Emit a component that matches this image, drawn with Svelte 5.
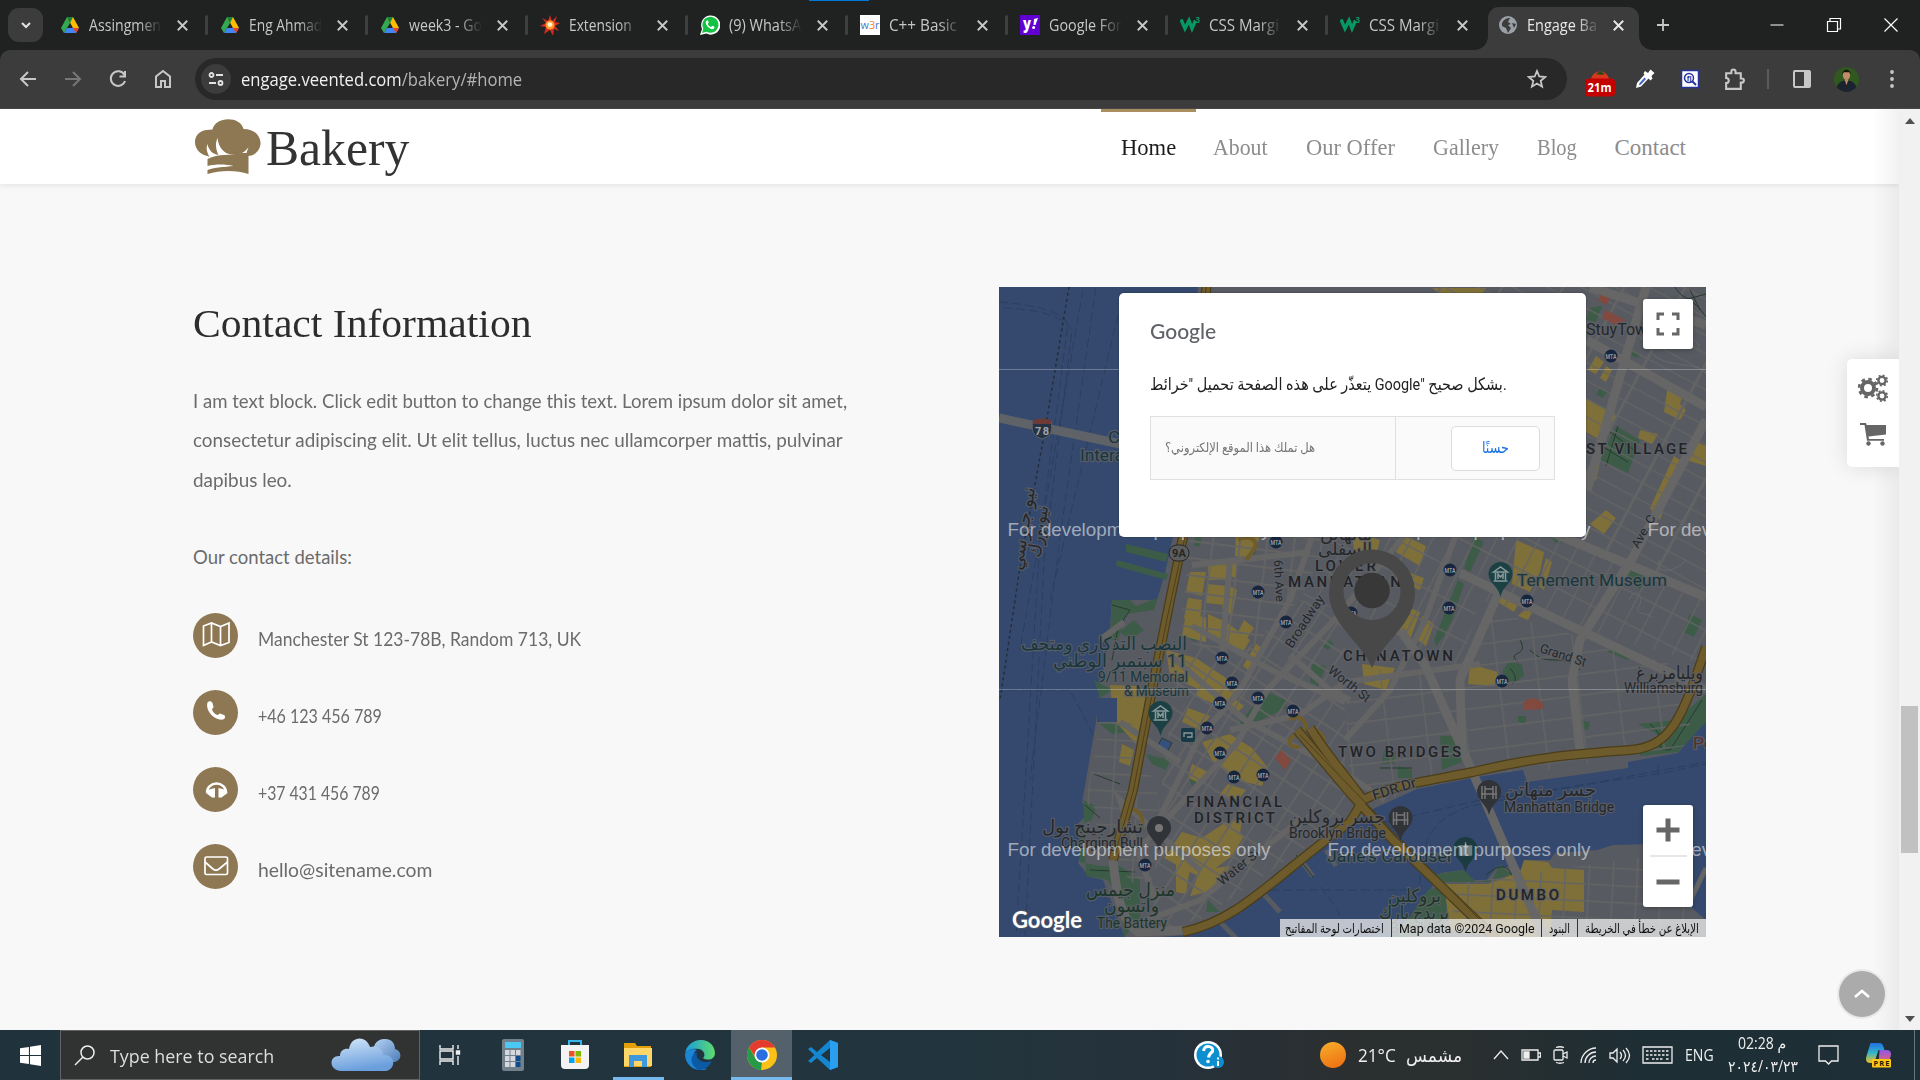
<script>
  // Stretches a text run horizontally so that it occupies exactly `width` pixels.
  function fit(node, width) {
    const natural = node.offsetWidth;
    if (!natural) return;
    node.style.transform = `scaleX(${width / natural})`;
    node.style.marginRight = `${width - natural}px`;
  }

  const tabs = [
    { icon: 'drive', title: 'Assingmen', w: 72 },
    { icon: 'drive', title: 'Eng Ahmad', w: 73 },
    { icon: 'drive', title: 'week3 - Go', w: 73 },
    { icon: 'burst', title: 'Extension', w: 63 },
    { icon: 'whatsapp', title: '(9) WhatsA', w: 72 },
    { icon: 'w3r', title: 'C++ Basic', w: 68 },
    { icon: 'yahoo', title: 'Google For', w: 73 },
    { icon: 'w3', title: 'CSS Margi', w: 70 },
    { icon: 'w3', title: 'CSS Margi', w: 70 },
    { icon: 'globe', title: 'Engage Ba', w: 70, active: true }
  ];

  const nav = [
    { label: 'Home', w: 55, active: true },
    { label: 'About', w: 55 },
    { label: 'Our Offer', w: 89 },
    { label: 'Gallery', w: 66 },
    { label: 'Blog', w: 40 },
    { label: 'Contact', w: 72 }
  ];

  const intro = [
    { text: 'I am text block. Click edit button to change this text. Lorem ipsum dolor sit amet,', w: 654 },
    { text: 'consectetur adipiscing elit. Ut elit tellus, luctus nec ullamcorper mattis, pulvinar', w: 650 },
    { text: 'dapibus leo.', w: 99 }
  ];

  const details = [
    { icon: 'map', text: 'Manchester St 123-78B, Random 713, UK', w: 323 },
    { icon: 'phone', text: '+46 123 456 789', w: 124 },
    { icon: 'headset', text: '+37 431 456 789', w: 122 },
    { icon: 'mail', text: 'hello@sitename.com', w: 174 }
  ];

  // Map canvas data: [x, y, length, size, text, class, rotation]
  const labels = [
    [1586, 335, 70, 16, 'StuyTown', 'soft', 0],
    [1586, 454, 101, 15, 'ST VILLAGE', 'area', 0],
    [1517, 586, 150, 17, 'Tenement Museum', 'teal', 0],
    [1315, 571, 61, 15, 'LOWER', 'area', 0],
    [1288, 587, 113, 15, 'MANHATTAN', 'area', 0],
    [1343, 661, 110, 15, 'CHINATOWN', 'area', 0],
    [1338, 757, 123, 15, 'TWO BRIDGES', 'area', 0],
    [1496, 900, 63, 15, 'DUMBO', 'area', 0],
    [1186, 807, 96, 15, 'FINANCIAL', 'area', 0],
    [1194, 823, 81, 15, 'DISTRICT', 'area', 0],
    [1320, 540, 52, 17, 'مانهاتن', 'soft', 0],
    [1318, 555, 54, 17, 'السفلى', 'soft', 0],
    [1021, 650, 166, 18, 'النصب التذكاري ومتحف', 'teal', 0],
    [1053, 667, 134, 18, '\u200F11 سبتمبر الوطني', 'teal', 0],
    [1098, 682, 90, 14, '9/11 Memorial', 'teal', 0],
    [1124, 696, 65, 14, '& Museum', 'teal', 0],
    [1042, 833, 101, 18, 'تشارجينج بول', 'soft', 0],
    [1061, 848, 82, 14, 'Charging Bull', 'soft', 0],
    [1086, 896, 89, 18, 'منزل جيمس', 'green', 0],
    [1104, 912, 55, 18, 'واتسون', 'green', 0],
    [1097, 928, 70, 14, 'The Battery', 'green', 0],
    [1289, 823, 96, 18, 'جسر بروكلين', 'soft', 0],
    [1289, 838, 97, 14, 'Brooklyn Bridge', 'soft', 0],
    [1505, 796, 91, 18, 'جسر منهاتن', 'soft', 0],
    [1504, 812, 110, 14, 'Manhattan Bridge', 'soft', 0],
    [1327, 862, 124, 17, "Jane's Carousel", 'teal', 0],
    [1388, 902, 53, 18, 'بروكلين', 'green', 0],
    [1379, 919, 70, 18, 'بريدج بارك', 'green', 0],
    [1390, 933, 56, 14, 'Brooklyn', 'green', 0],
    [1636, 679, 67, 18, 'ويليامزبرغ', 'soft', 0],
    [1624, 693, 79, 14, 'Williamsburg', 'soft', 0],
    [1108, 443, 12, 16, 'C', 'teal', 0],
    [1080, 461, 80, 16, 'Interactive', 'teal', 0],
    [1693, 749, 20, 16, 'Pe', 'brown', 0],
    [1374, 800, 45, 14, 'FDR Dr', 'soft', -17],
    [1539, 652, 48, 13, 'Grand St', 'soft', 18],
    [1327, 672, 50, 13, 'Worth St', 'soft', 38],
    [1292, 649, 60, 13, 'Broadway', 'soft', -57],
    [1222, 886, 50, 13, 'Water St', 'soft', -39],
    [1638, 549, 36, 12, 'Ave. C', 'soft', -60],
    [1274, 560, 42, 12, '6th Ave', 'soft', 87],
    [1022, 571, 84, 18, 'نيو جيرسي', 'soft', -81],
    [1040, 558, 52, 18, 'نيويورك', 'soft', -81]
  ];

  const stations = [
    [1276, 542], [1258, 592], [1611, 356], [1450, 570], [1449, 608], [1527, 601],
    [1222, 658], [1232, 683], [1220, 703], [1258, 698], [1293, 711], [1207, 728],
    [1220, 753], [1234, 777], [1263, 775], [1145, 865], [1502, 681], [1351, 613], [1286, 622]
  ];

  const shops = [
    '1190,572 1206,572 1202,596 1186,592', '1208,566 1228,564 1226,580 1208,580',
    '1208,584 1227,586 1224,605 1206,603', '1188,598 1202,600 1200,622 1184,618',
    '1230,560 1236,560 1236,578 1230,576', '1230,586 1237,590 1232,616 1222,608',
    '1236,532 1262,532 1250,560 1235,556', '1186,612 1206,618 1206,642 1182,636',
    '1208,614 1226,622 1250,640 1242,654 1222,646 1208,636',
    '1166,650 1196,658 1226,678 1240,694 1232,706 1200,690 1170,676',
    '1200,672 1222,690 1214,704 1196,696', '1244,620 1254,628 1246,640 1238,632',
    '1256,644 1262,648 1248,670 1243,666', '1236,700 1244,706 1236,714 1230,708',
    '1110,685 1140,686 1146,700 1136,744 1114,720', '1122,744 1134,750 1130,766 1119,762',
    '1188,708 1210,716 1200,730 1182,722', '1202,742 1230,734 1252,748 1268,768 1262,786 1236,780 1212,760',
    '1192,764 1208,772 1202,784 1188,778', '1228,784 1246,790 1238,800 1220,794',
    '1182,832 1202,838 1226,822 1244,836 1232,856 1202,878 1186,870 1164,858',
    '1176,864 1190,868 1186,894 1176,892', '1200,870 1230,866 1216,890 1190,896', '1222,826 1242,818 1240,834 1230,840',
    '1405,536 1426,546 1420,566 1396,552', '1352,532 1380,540 1376,556 1354,552',
    '1396,568 1424,578 1420,590 1396,580', '1400,604 1420,612 1410,640 1396,634', '1422,616 1434,624 1426,646 1418,640',
    '1362,664 1395,668 1386,690 1364,684', '1470,664 1498,672 1494,686 1468,684',
    '1516,540 1544,552 1540,572 1530,592 1512,584', '1546,558 1552,562 1544,590 1538,586',
    '1524,610 1532,612 1528,620 1518,616', '1500,594 1518,604 1514,612 1498,602',
    '1586,398 1616,416 1600,440 1586,432', '1586,470 1600,462 1596,480 1586,486',
    '1596,356 1604,362 1596,374 1588,370', '1606,366 1612,370 1606,382 1600,378',
    '1668,384 1684,392 1680,404 1686,410 1680,420 1664,412', '1640,430 1658,434 1652,444 1638,438',
    '1692,440 1706,446 1706,466 1686,460', '1674,456 1680,460 1660,520 1650,508',
    '1590,524 1606,510 1616,518 1604,534', '1432,288 1486,288 1482,294 1440,294',
    '1524,860 1548,862 1552,868 1584,870 1584,912 1552,910 1550,937 1500,937 1450,930 1444,884 1488,884 1520,872'
  ];

  const parks = [
    '1112,600 1130,600 1136,606 1158,598 1154,610 1126,614 1118,640 1110,640',
    '1126,544 1168,554 1166,562 1126,552', '1117,560 1168,574 1166,580 1116,566',
    '1184,620 1198,622 1196,642 1184,636', '1267,692 1286,700 1286,708 1240,730 1240,722 1258,700',
    '1134,620 1144,630 1130,640 1120,632', '1094,680 1112,690 1100,698', '1100,724 1124,722 1128,732 1112,734',
    '1083,800 1096,806 1092,820 1078,826 1080,862 1100,866 1120,866 1140,880 1140,920 1124,937 1120,900 1108,880 1086,876',
    '1146,754 1170,760 1166,770 1152,764', '1188,776 1198,780 1192,786', '1312,664 1326,666 1318,686 1310,682',
    '1330,640 1334,644 1328,650 1322,646', '1616,426 1640,440 1628,473 1600,460',
    '1600,388 1608,392 1602,398 1596,394', '1590,308 1602,306 1596,322 1586,320', '1630,350 1640,354 1638,358 1628,354',
    '1474,536 1484,542 1470,572 1464,568', '1458,580 1464,584 1452,620 1444,636 1436,646 1434,640',
    '1626,566 1648,576 1640,590 1628,578', '1690,614 1702,620 1694,637 1683,632',
    '1508,662 1522,664 1524,676 1512,684 1502,672', '1606,644 1632,656 1628,660 1608,652',
    '1638,724 1676,720 1706,694 1706,722 1678,752 1640,756 1640,746 1668,740', '1440,736 1454,736 1462,762 1442,770',
    '1580,720 1590,722 1588,730 1578,728', '1518,716 1526,716 1526,724 1518,722', '1398,766 1412,770 1412,778 1398,778',
    '1384,750 1396,752 1394,764 1382,764', '1436,874 1464,870 1476,882 1492,880 1500,864 1508,872 1518,872 1488,882 1440,882',
    '1428,890 1450,884 1444,926 1410,937 1396,937', '1208,900 1220,912 1206,912', '1196,536 1202,536 1200,546 1194,546',
    '1248,542 1256,552 1250,560 1242,554', '1552,536 1562,538 1560,544 1554,542'
  ];

  const red = [
    '1602,292 1612,296 1606,305 1598,300', '1606,310 1625,320 1618,326 1602,318',
    '1281,750 1291,760 1285,770 1275,758', '1523,703 1530,698 1540,700 1544,706 1542,709 1524,710'
  ];

  const minorRoads = [
    'M1143 845 1237 743 1267 690 1337 617 1405 535', 'M1170 655 1245 720 1340 770 1385 800',
    'M1230 730 1300 715 1345 682 1435 670 1480 664', 'M1192 626 1275 672 1345 702',
    'M1160 817 1198 740 1240 690 1290 600 1312 537', 'M1230 560 1222 655', 'M1192 565 1310 552',
    'M1134 925 1200 900 1262 850 1300 820', 'M1345 740 1390 690 1425 620 1455 537',
    'M1155 900 1120 800 1200 870', 'M1120 722 1180 762', 'M1100 640 1124 622', 'M1290 655 1330 690 1350 700'
  ];
  const mainRoads = [
    'M1587 340 1706 407', 'M1646 287 1587 490', 'M1706 420 1633 557 1580 640 1572 680 1580 750',
    'M1460 573 1537 610 1706 690', 'M1510 515 1706 597', 'M1500 590 1460 680 1462 750',
    'M1400 630 1425 665 1476 780 1544 937', 'M1590 287 1706 325', 'M1113 860C1116 890 1120 920 1138 932L1190 930',
    'M1470 280 1640 280'
  ];
  const highways = [
    'M1207 280 1183 537 1168 610 1150 700 1133 790 1113 860',
    'M1183 932C1240 920 1270 880 1350 822L1363 800C1390 786 1410 784 1473 772C1540 756 1580 754 1630 750C1670 747 1682 720 1706 647',
    'M1297 730 1350 793 1393 840 1497 940', 'M1310 728C1330 760 1350 780 1363 800'
  ];
  const watermarks = [[1007.5, 536], [1327.5, 536], [1647.5, 536], [1007.5, 856], [1327.5, 856], [1647.5, 856]];
</script>

{#snippet favicon(name)}
  <svg class="fav" viewBox="0 0 20 20">
    {#if name === 'drive'}
      <path fill="#34a853" d="M7 2 1 13l3 5 6-10z" /><path fill="#fbbc04" d="M7 2h6l6 11h-6z" /><path fill="#4285f4" d="m4 18 3-5h12l-3 5z" /><path fill="#ea4335" d="M13 13h6l-3 5z" /><path fill="#188038" d="m7 2 3 6 3-6z" />
    {:else if name === 'burst'}
      <path fill="#d52b1e" d="m10 0 2 6 5-5-2 6 5 1-5 3 4 5-5-2-1 7-3-6-6 4 2-7-6-1 6-3-4-5 6 3z" /><circle cx="10" cy="10" r="4.500" fill="#ff9a2e" /><circle cx="10" cy="9.600" r="2.400" fill="#fff3c8" />
    {:else if name === 'whatsapp'}
      <path fill="#fff" d="m0 20 2-6A9.600 9.600 0 1 1 6.400 18.600z" /><path fill="#13c143" d="m2 18 1.400-4.400a8 8 0 1 1 3.200 3.200z" /><path fill="#fff" d="M7 5.400c-2 1-1.400 3.600.8 6.400 2.400 2.400 5.200 3.400 6.400 1.400.6-1.400.2-1.600-1.800-2.400-.8 0-.8 1.400-1.600 1.200-1.600-.6-2.400-1.800-3-3 0-.6 1-1 .8-1.800-.6-1.600-.8-2-1.600-1.800z" />
    {:else if name === 'w3r'}
      <rect width="20" height="20" fill="#fff" /><text x="0.500" y="14" font-size="11" textLength="19" lengthAdjust="spacingAndGlyphs" fill="#4a7dc0">w<tspan fill="#f08030">3</tspan>r</text>
    {:else if name === 'yahoo'}
      <rect width="20" height="20" fill="#6001d2" /><text x="3" y="14" font-size="15" font-weight="800" textLength="8" lengthAdjust="spacingAndGlyphs" fill="#fff">y</text><path d="m14 4 4-1-2.500 7h-2z" fill="#fff" /><circle cx="13.600" cy="12.500" r="1.500" fill="#fff" />
    {:else if name === 'w3'}
      <path d="m1 4.500 4 9 4-8 3 8 3.500-8" fill="none" stroke="#059862" stroke-width="3.400" /><text x="15.500" y="8" font-size="8" font-weight="700" fill="#059862">3</text>
    {:else}
      <circle cx="10" cy="10" r="9" fill="#9aa0a6" /><path d="M4 8c2-4 5-5 8-5l-2 4 3 2-3 1 3 3-3 5-2-5-4-2z" fill="#3c3c3c" /><path d="m14 8 4 1-2 4z" fill="#3c3c3c" />
    {/if}
  </svg>
{/snippet}

{#snippet cross()}
  <svg class="cross" viewBox="0 0 10 10"><path d="m.7.7 8.600 8.600M9.300.7.7 9.300" fill="none" stroke="currentColor" stroke-width="1.700" /></svg>
{/snippet}

<div class="screen">
  <div class="tabstrip">
    <div class="accent"></div>
    <button class="tabsearch" aria-label="Search tabs"><svg viewBox="0 0 12 12" width="12" height="12"><path d="m2 4 4 4 4-4" fill="none" stroke="#e3e3e3" stroke-width="2" /></svg></button>
    <div class="tabs">
      {#each tabs as tab, i}
        <div class="tab" class:active={tab.active} class:divided={i < 8}>
          {@render favicon(tab.icon)}
          <div class="title"><span class="fit" use:fit={tab.w}>{tab.title}</span></div>
          {@render cross()}
        </div>
      {/each}
    </div>
    <svg class="plus" viewBox="0 0 14 14"><path d="M7 1v12M1 7h12" stroke="#c7c7c7" stroke-width="1.800" /></svg>
    <div class="winbtns">
      <svg viewBox="0 0 16 16"><path d="M1.500 8h13" stroke="#fff" /></svg>
      <svg viewBox="0 0 16 16"><path d="M1.500 4.500h10v10h-10zM4 4V1.500h10.500V12H12" fill="none" stroke="#fff" stroke-width="1.200" /></svg>
      <svg viewBox="0 0 16 16"><path d="m1.500 1.500 13 13m0-13-13 13" stroke="#fff" stroke-width="1.200" /></svg>
    </div>
  </div>

  <div class="toolbar">
    <div class="cell"><svg viewBox="0 0 20 20"><path d="M18 10H3m7-7-7 7 7 7" fill="none" stroke="#c7c7c7" stroke-width="2" /></svg></div>
    <div class="cell"><svg viewBox="0 0 20 20"><path d="M2 10h15m-7-7 7 7-7 7" fill="none" stroke="#777" stroke-width="2" /></svg></div>
    <div class="cell"><svg viewBox="0 0 20 20"><path d="M16.500 6A7.300 7.300 0 1 0 17 12M17 2v5.500h-5.500" fill="none" stroke="#c7c7c7" stroke-width="2" /></svg></div>
    <div class="cell"><svg viewBox="0 0 20 20"><path d="M3 18V7.500l7-5.500 7 5.500V18h-5v-6H8v6z" fill="none" stroke="#c7c7c7" stroke-width="2" /></svg></div>
    <div class="omnibox">
      <div class="siteinfo"><svg viewBox="0 0 16 16" width="16" height="16" fill="none" stroke="#e3e3e3" stroke-width="1.800"><circle cx="3.500" cy="4" r="2" /><path d="M8 4h7M1 12h7" /><circle cx="12.500" cy="12" r="2" /></svg></div>
      <div class="url"><span class="fit" use:fit={281}>engage.veented.com<em>/bakery/#home</em></span></div>
      <svg class="star" viewBox="0 0 20 20"><path d="m10 2 2.300 5.500 5.900.5-4.500 3.900 1.400 5.800L10 14.600l-5.100 3.100 1.400-5.800L1.800 8l5.900-.5z" fill="none" stroke="#c7c7c7" stroke-width="1.800" /></svg>
    </div>
    <div class="cell"><svg class="tomato" viewBox="0 0 30 28"><path d="M6 9C8-1 22-1 24 9z" fill="#d9381e" /><path d="m11 4 4-3 5 3-4 1z" fill="#2b4a1c" /><rect y="8.500" width="30" height="18" rx="4" fill="#c40000" /><text x="2.500" y="22" font-size="12" font-weight="700" textLength="24" lengthAdjust="spacingAndGlyphs" fill="#fff">21m</text></svg></div>
    <div class="cell"><svg viewBox="0 0 20 20"><path d="m1 19 1-5 8-9 4 4-8 8.500z" fill="#fff" /><path d="m4 16.500.5-2.500 5-5.500 1.500 1.500-5 5.500z" fill="#4365c8" /><path d="m10 2 3 2 2.500-3.500 4 3.500-3 3 1 2.500-2 2-7-7z" fill="#fff" /></svg></div>
    <div class="cell"><svg viewBox="0 0 20 20"><rect x="1.500" y="1.500" width="17" height="17" fill="#fff" stroke="#27339c" stroke-width="1.500" /><circle cx="9" cy="9" r="4.500" fill="none" stroke="#27339c" stroke-width="1.500" /><path d="m12 12 4 4" stroke="#27339c" stroke-width="2" /><text x="6.800" y="11.500" font-size="7" font-weight="700" fill="#27339c">fj</text></svg></div>
    <div class="cell"><svg class="big" viewBox="0 0 22 22"><path d="M3 5h5V3.500a2 2 0 0 1 4 0V5h5v5h1a2 2 0 0 1 0 4h-1v6H3v-5.500a2.500 2.500 0 0 0 0-5z" fill="none" stroke="#c7c7c7" stroke-width="2" /></svg></div>
    <div class="vsep"></div>
    <div class="cell"><svg viewBox="0 0 20 20"><rect x="2" y="2" width="16" height="16" rx="1" fill="none" stroke="#c7c7c7" stroke-width="2" /><path d="M12 2h6v16h-6z" fill="#c7c7c7" /></svg></div>
    <div class="cell"><svg class="avatar" viewBox="0 0 26 26"><defs><clipPath id="av"><circle cx="13" cy="13" r="13" /></clipPath></defs><g clip-path="url(#av)"><rect width="26" height="26" fill="#31591f" /><path d="M1 26c2-9 6-12 12-12s10 3 12 12z" fill="#1c2330" /><ellipse cx="13" cy="8.500" rx="3.800" ry="5" fill="#c08c68" /><path d="M8.800 8C8 1 18 1 17.200 8L16 5.500h-6z" fill="#19130f" /><path d="m11 13 2 6 2-6z" fill="#c08c68" /></g></svg></div>
    <div class="cell"><svg viewBox="0 0 20 20" fill="#c7c7c7"><circle cx="10" cy="3" r="1.900" /><circle cx="10" cy="10" r="1.900" /><circle cx="10" cy="17" r="1.900" /></svg></div>
  </div>

  <div class="viewport">
    <div class="page">
      <header>
        <div class="logo">
          <svg class="hat" viewBox="0 0 66 56"><path fill="#8e7853" d="M13 37C-3 34-4 13 12 11l6-.5C21-3 46-3 49 10c22 0 22 26 4 27-2-1-1-3 1-9-4 6-9 8-14 7-8 2-16-5-17-16-3 7-1 13 1 17-6-1-10-5-11-11-2 5 0 9 2 13z" /><path fill="#8e7853" d="M13 40c11-6 23-3 34-6h7v21c-12-4-28-4-41 0v-4c8-3 17-3 26-4-8-2-18-2-26 0z" /></svg>
          <span class="brand fit" use:fit={143}>Bakery</span>
        </div>
        <nav>
          {#each nav as item}
            <a href="#home" class:current={item.active}><span class="fit" use:fit={item.w}>{item.label}</span></a>
          {/each}
        </nav>
      </header>

      <main>
        <section class="info">
          <h2><span class="fit" use:fit={338}>Contact Information</span></h2>
          <div class="intro">
            {#each intro as line}<p><span class="fit" use:fit={line.w}>{line.text}</span></p>{/each}
          </div>
          <p class="lead"><span class="fit" use:fit={159}>Our contact details:</span></p>
          <ul>
            {#each details as d}
              <li>
                <div class="disc">
                  <svg viewBox="0 0 28 28" fill="none" stroke="#fff" stroke-width="1.700">
                    {#if d.icon === 'map'}<path d="m1.500 5 8-3 9 3.500L27 2v19.500l-8.500 3L9.500 21l-8 3.500zM9.500 2v19m9-15.500v19" />
                    {:else if d.icon === 'phone'}<path stroke="none" fill="#fff" d="M5.500 4.500c1.500-2 4-1.500 5 .5l1 4c0 1-1.500 1.500-1.500 2.500 1 3 3 4.500 5.500 5.500 1 0 1.500-1.500 2.500-1.500l4 1.500c2 1.500 1 4-1 4.500C13 23 3 13 5.500 4.500z" />
                    {:else if d.icon === 'headset'}<path d="M5 17.500a9.500 9 0 1 1 19 0" stroke-width="2.500" /><path stroke="none" fill="#fff" d="M13 13v9.500h-3L4 18C5 15 8 14 13 13zm3.500 0v9.500h3L25.500 18c-1-3-4-4-9-5z" />
                    {:else}<rect x="3" y="5" width="22.500" height="17.500" rx="1.500" /><path d="m3 10 8 7q3 2.500 6 0l8.500-7" />{/if}
                  </svg>
                </div>
                <span class="fit" use:fit={d.w}>{d.text}</span>
              </li>
            {/each}
          </ul>
        </section>

        <section class="map">
          <svg class="canvas" viewBox="999 287 707 650">
            <defs>
              <pattern id="gEast" width="54" height="16" patternUnits="userSpaceOnUse" patternTransform="rotate(28 1590 400)"><path d="M0 0H54" stroke="#646464" stroke-width="2.600" /><path d="M0 0V16" stroke="#646464" stroke-width="5" /></pattern>
              <pattern id="gMid" width="19" height="30" patternUnits="userSpaceOnUse" patternTransform="rotate(27 1450 600)"><path d="M0 0H19M0 0V30" stroke="#646464" stroke-width="2.800" /></pattern>
              <pattern id="gSoho" width="27" height="17" patternUnits="userSpaceOnUse" patternTransform="rotate(7)"><path d="M0 0H27M0 0V17" stroke="#646464" stroke-width="3.400" /></pattern>
              <pattern id="gFin" width="20" height="23" patternUnits="userSpaceOnUse" patternTransform="rotate(33)"><path d="M0 0H20M0 0V23" stroke="#646464" stroke-width="3.400" /></pattern>
              <pattern id="gLes" width="39" height="21" patternUnits="userSpaceOnUse" patternTransform="rotate(-7)"><path d="M0 0H39M0 0V21" stroke="#646464" stroke-width="2.800" /></pattern>
              <pattern id="gDum" width="24" height="17" patternUnits="userSpaceOnUse" patternTransform="rotate(3)"><path d="M0 0H24M0 0V17" stroke="#646464" stroke-width="3" /></pattern>
              <clipPath id="land"><path id="shore" d="M1198 287 1173 537 1165 573 1157 600H1112L1109 640 1100 687 1096 722 1082 803 1094 807 1077 825 1085 843 1078 863 1090 877 1103 880 1125 937H1160L1187 935 1220 920 1263 888 1350 826 1373 809 1417 789 1477 777 1523 770 1527 782 1628 768V762L1678 753 1706 720V287Z" /></clipPath>
            </defs>
            <rect x="999" y="287" width="707" height="650" fill="#34496d" />
            <g class="ferry">
              <path d="M999 302Q1055 306 1068 323L1040 537 1016 937M1003 308Q1060 310 1072 330L1044 560 1025 937M1096 287 1060 537 1030 780M1118 315 1050 600M1083 290 1020 650M1008 690 1070 690 1096 740M1270 890H1420C1420 840 1430 820 1470 806L1706 762M1320 887C1350 920 1340 930 1350 937M1370 826 1480 800 1658 774 1706 764M1658 774V765" />
            </g>
            <path d="M1069 287 1045 430 1021 560 1000 700" fill="none" stroke="#242c3b" stroke-width="1.400" stroke-dasharray="3 3" />
            <path d="M999 418 1125 445" stroke="#5f6266" stroke-width="9" />
            <use href="#shore" fill="#575a61" />
            <path d="M1400 937 1430 890 1440 873 1463 870 1473 880 1487 880 1497 867 1510 867 1523 870 1527 860H1550L1555 853 1597 850 1613 845 1690 843 1692 908 1706 920V937Z" fill="#575a61" />
            <path d="m1216 918 24 24M1260 890l20 22m17-57 16 21M1326 850l10 16" stroke="#575a61" stroke-width="5" />
            <path d="M1706 868 1688 905" stroke="#646464" stroke-width="5" />
            {#each parks as p}<polygon points={p} fill="#3d5c48" />{/each}
            <path d="M1296 855 1313 877M1112 605 1130 610 1118 628 1112 660M1600 445 1628 462M1610 432 1634 450M1618 426 1606 466M1094 774 1120 784M1085 805 1100 818M1090 870 1135 872M1650 724C1670 740 1650 750 1670 750L1702 700M1510 668Q1520 680 1512 684M1380 768H1412M1486 875Q1506 858 1512 876M1520 640C1530 658 1505 650 1518 662M1530 650C1550 670 1560 650 1580 670" fill="none" stroke="#253b2c" stroke-width="1" />
            <g clip-path="url(#land)">
              {#each shops.slice(0, -1) as p}<polygon points={p} fill="#7f7039" />{/each}
              <path d="M1190 537H1330L1300 600 1240 660 1180 640Z" fill="url(#gSoho)" />
              <path d="M1180 640 1240 655 1300 600 1345 610 1345 820 1200 920 1150 930 1160 800Z" fill="url(#gFin)" />
              <path d="M1100 720 1130 720 1160 800 1150 900 1110 860 1086 800Z" fill="url(#gDum)" />
              <path d="M1330 537H1560L1706 600V665L1480 600 1460 670 1345 610 1300 600Z" fill="url(#gMid)" />
              <path d="M1420 287H1706V590L1560 537Z" fill="url(#gEast)" />
              <path d="M1345 670 1460 670 1490 610 1690 670V745L1350 805Z" fill="url(#gLes)" />
            </g>
            <polygon points={shops[shops.length - 1]} fill="#7f7039" />
            <path d="M1450 885 1692 850V937H1455Z" fill="url(#gDum)" />
            {#each red as p}<polygon points={p} fill="#82493f" />{/each}
            <rect x="1097" y="698" width="20" height="24" fill="#34496d" />
            <polygon points="1162,738 1172,743 1167,752 1157,747" fill="#34507f" stroke="#253b2c" />
            {#each minorRoads as d}<path {d} class="minor" />{/each}
            {#each mainRoads as d}<path {d} class="main" />{/each}
            <path d="M1290 720c10-10 24 8 8 14s-6 16 2 12M1310 732c10-6 20 10 10 20M1125 810c14-4 20 8 16 18M1238 540c10-6 24 0 14 12l-6 8" fill="none" stroke="#6f5c2b" stroke-width="4" />
            {#each highways as d}<path {d} class="hwcase" />{/each}
            {#each highways as d}<path {d} class="hw" />{/each}
            <path d="M1206 287 1185 537 1168 614 1133 792 1115 855M1300 735 1363 800 1480 920" fill="none" stroke="#4d3f19" stroke-width="1" />
            <path d="M1629 600c6-14 16-4 10 6s10 6 14 12M1660 560c-8 14 14 14 26 0M1640 340c20-24 50-6 60 6M1650 350c10 20 50 10 56 24" fill="none" stroke="#66696e" />
            <path d="M1675 287c8 14 16 8 31 30M1690 290l10 20M1684 300l22-6" fill="none" stroke="#253b2c" />
            {#each stations as [x, y]}
              <circle cx={x} cy={y} r="6.500" fill="#17253f" /><text class="mta" {x} y={y + 3} textLength="11" lengthAdjust="spacingAndGlyphs">MTA</text>
            {/each}
            {#each [[1160.5, 713, '#1b4145', 'm'], [1500.5, 574, '#1b4145', 'm'], [1159, 828, '#303338', 'o'], [1489, 792, '#303338', 'b'], [1400.5, 818, '#303338', 'b'], [1465.5, 849, '#1b3b40', 'f']] as [x, y, c, k]}
              <g transform="translate({x} {y})">
                <path d="M0 23C-2 12-12 9-12 0a12 12 0 0 1 24 0C12 9 2 12 0 23z" fill={c} />
                {#if k === 'm'}<path d="m-7-2 7-5 7 5zM-5-1v7M5-1v7M-7 7H7M-2.500 5V0L0 3l2.500-3v5" fill="none" stroke="#8b9a9c" stroke-width="1.500" />
                {:else if k === 'o'}<circle r="4" fill="#777" />
                {:else if k === 'b'}<path d="M-4-6V7M4-6V7M-7-6v13M7-6v13M-8 2H8M-4-3h8" stroke="#777" stroke-width="1.500" />
                {:else}<path d="M-6-3H6v9H-6zM0-7v4" stroke="#6f8083" stroke-width="1.500" fill="#6f8083" />{/if}
              </g>
            {/each}
            <rect x="1181" y="728" width="14" height="14" rx="2" fill="#183a47" /><path d="M1184 737v-4h8v4h-5" fill="none" stroke="#8b9a9c" stroke-width="1.300" />
            <path d="M1033 421q9-3 18 0c2 10 0 15-9 18-9-3-11-8-9-18z" fill="#263344" stroke="#59616c" /><path d="M1033 420q9-3 18 0v4h-18z" fill="#6d3a36" /><text x="1035" y="435" font-size="11" font-weight="700" textLength="14" fill="#a2a5a9">78</text>
            <rect x="1169" y="545" width="20" height="16" rx="8" fill="#5c5c5c" stroke="#262626" /><text x="1172" y="557" font-size="11" font-weight="700" textLength="14" fill="#242424">9A</text>
            {#each labels as [x, y, w, s, t, c, r]}
              <text class="lbl {c}" {x} {y} textLength={w} lengthAdjust={c === 'area' ? 'spacing' : 'spacingAndGlyphs'} font-size={s} transform="rotate({r} {x} {y})">{t}</text>
            {/each}
            <path fill="#484848" fill-rule="evenodd" d="M1372 668C1362 642 1329 624 1329 592.500a43 43 0 0 1 86 0C1415 624 1382 642 1372 668zM1372 563a28.500 28.500 0 1 0 0 57 28.500 28.500 0 0 0 0-57z" />
            <circle cx="1372" cy="590.500" r="17.800" fill="#383838" />
            <path d="M999 369.500H1706M999 689.500H1706" stroke="#fff" stroke-opacity=".28" />
            {#each watermarks as [x, y]}<text class="dev" {x} {y} textLength="263" lengthAdjust="spacingAndGlyphs">For development purposes only</text>{/each}
            <text class="glogo" x="1012" y="928" textLength="70" lengthAdjust="spacingAndGlyphs">Google</text>
          </svg>

          <div class="dialog">
            <div class="gword"><span class="fit" use:fit={66}>Google</span></div>
            <div class="msg"><span class="fit" use:fit={357}>يتعذّر على هذه الصفحة تحميل "خرائط Google" بشكل صحيح.</span></div>
            <div class="row">
              <div class="own"><span class="fit" use:fit={150}>هل تملك هذا الموقع الإلكتروني؟</span></div>
              <div class="okcell"><button class="ok"><span class="fit" use:fit={27}>حسنًا</span></button></div>
            </div>
          </div>
          <div class="ctl full"><svg viewBox="0 0 24 24" width="24" height="24"><path d="M2 8V2h6m8 0h6v6m0 8v6h-6m-8 0H2v-6" fill="none" stroke="#666" stroke-width="3" /></svg></div>
          <div class="ctl zoom">
            <svg viewBox="0 0 24 24" width="24" height="24"><path d="M12 .5v23M.5 12h23" stroke="#666" stroke-width="5" /></svg>
            <i></i>
            <svg viewBox="0 0 24 24" width="24" height="24"><path d="M.5 12h23" stroke="#666" stroke-width="5" /></svg>
          </div>
          <div class="credits">
            <span class="fit" use:fit={99}>اختصارات لوحة المفاتيح</span><b></b>
            <span class="fit" use:fit={136}>Map data ©2024 Google</span><b></b>
            <span class="fit" use:fit={21}>البنود</span><b></b>
            <span class="fit" use:fit={114}>الإبلاغ عن خطأ في الخريطة</span>
          </div>
        </section>
      </main>

      <div class="edge"></div>
      <aside>
        <svg viewBox="0 0 30 28" width="30" height="28"><g fill="none" stroke="#666"><circle cx="10" cy="14" r="6" stroke-width="4" /><circle cx="10" cy="14" r="9" stroke-width="2.600" stroke-dasharray="3.600 3.470" /><circle cx="24" cy="6.500" r="3.600" stroke-width="2.400" /><circle cx="24" cy="6.500" r="5.300" stroke-width="1.600" stroke-dasharray="2 2.160" /><circle cx="24" cy="22" r="3.600" stroke-width="2.400" /><circle cx="24" cy="22" r="5.300" stroke-width="1.600" stroke-dasharray="2 2.160" /></g></svg>
        <svg viewBox="0 0 27 23" width="27" height="23"><path d="M0 0h6l.7 2H26v9.500L8.500 13.500l.5 2.500h15v1.800H7L4.500 2H0z" fill="#666" /><circle cx="8.500" cy="20.500" r="2.200" fill="#666" /><circle cx="22.500" cy="20.500" r="2.200" fill="#666" /></svg>
      </aside>
      <div class="totop"><svg viewBox="0 0 18 18" width="18" height="18"><path d="m2 12 7-6 7 6" fill="none" stroke="#fff" stroke-width="2.500" /></svg></div>
    </div>
    <div class="scrollbar">
      <svg viewBox="0 0 10 6"><path d="m0 6 5-6 5 6z" fill="#505050" /></svg>
      <div class="thumb"></div>
      <svg viewBox="0 0 10 6"><path d="m0 0 5 6 5-6z" fill="#505050" /></svg>
    </div>
  </div>

  <footer>
    <div class="t start"><svg viewBox="0 0 20 20" width="21" height="21"><path fill="#fff" d="m0 3 8.500-1.200v7.700H0zM9.500 1.600 20 0v9.500H9.500zM0 10.500h8.500v7.700L0 17zM9.500 10.500H20V20L9.500 18.400z" /></svg></div>
    <div class="search">
      <svg viewBox="0 0 22 22" width="22" height="22"><circle cx="13.500" cy="8.500" r="6.500" fill="none" stroke="#eee" stroke-width="1.500" /><path d="m9 13-8 8" stroke="#eee" stroke-width="1.500" /></svg>
      <div class="stext"><span class="fit" use:fit={164}>Type here to search</span></div>
      <svg class="cloud" viewBox="0 0 70 34" width="70" height="34"><defs><linearGradient id="cl" x1="0" y1="0" x2=".3" y2="1"><stop offset="0" stop-color="#d6e8fb" /><stop offset="1" stop-color="#6b9fdc" /></linearGradient><linearGradient id="cl2" x1="0" y1="0" x2="1" y2="1"><stop offset="0" stop-color="#b7d4f3" /><stop offset="1" stop-color="#4c7cb8" /></linearGradient></defs><path fill="url(#cl2)" d="M44 24C38 6 48 0 54 1c8 0 10 6 10 10 8 2 7 13-2 13z" /><path fill="url(#cl)" d="M10 33C-3 32-2 17 9 18c0-6 5-8 9-7C20-2 35-3 39 9c7-2 13 2 13 8 14-1 13 16 1 16z" /></svg>
    </div>
    <div class="t view"><svg viewBox="0 0 22 22" width="22" height="22" fill="none" stroke="#eee" stroke-width="1.400"><path d="M1 1v4h13V1M1 21v-4h13v4M1 7h13v8H1zM19 1v4M19 12v9" /><path d="M17.500 7h3v3h-3z" fill="#eee" /></svg></div>
    <div class="t calc"><svg viewBox="0 0 24 32" width="24" height="32"><rect x="1" width="22" height="32" rx="2" fill="#72808c" /><rect x="4" y="3" width="16" height="6" fill="#4cc8f4" />{#each [11, 17, 23] as y}{#each [4, 9.5, 15] as x}<rect {x} {y} width="4.500" height="5" fill={x === 15 && y > 11 ? '#0f4a8a' : '#d5d9de'} />{/each}{/each}</svg></div>
    <div class="t store"><svg viewBox="0 0 30 32" width="30" height="32"><path d="M9 8V2h12v6" fill="none" stroke="#35b5ee" stroke-width="2" /><path d="M1 6h28v20q0 4-4 4H5q-4 0-4-4z" fill="#f3f3f3" /><path d="M9 12h5.500v5.500H9z" fill="#f25022" /><path d="M15.500 12H21v5.500h-5.500z" fill="#7fba00" /><path d="M9 18.500h5.500V24H9z" fill="#00a4ef" /><path d="M15.500 18.500H21V24h-5.500z" fill="#ffb900" /></svg></div>
    <div class="t files"><svg viewBox="0 0 28 26" width="28" height="26"><path d="M0 1h11l2 3h14v21H0z" fill="#e3a008" /><path d="M0 6h28v18H0z" fill="#ffd667" /><path d="M5 25V13h18v12h-5v-6h-8v6z" fill="#3f97dc" /></svg></div>
    <div class="t edgeapp"><svg viewBox="0 0 30 30" width="30" height="30"><defs><linearGradient id="eg" x1="0" y1="0" x2="1" y2="0"><stop offset="0" stop-color="#1a9be0" /><stop offset="1" stop-color="#5ddc6a" /></linearGradient></defs><path d="M0 14C2-4 29-5 30 13c0 7-8 8-12 5 3-3 1-8-4-9C7 8 1 10 0 14z" fill="url(#eg)" /><path d="M0 14c2-5 8-6 12-4-5 2-6 14 6 18l4 1C10 33 0 25 0 14z" fill="#1b86d6" /><path d="M12 12c-2 8 6 12 15 9-3 6-8 9-13 9-9-4-10-15-2-18z" fill="#0c59a4" /></svg></div>
    <div class="t chrome"><svg viewBox="0 0 30 30" width="30" height="30"><circle cx="15" cy="15" r="15" fill="#fbc116" /><path d="M2 7.500A15 15 0 0 1 28 7.500H15L9 18z" fill="#e33b2e" /><path d="M2 7.500 9 19l6 3.500L14 30A15 15 0 0 1 2 7.500z" fill="#269a46" /><circle cx="15" cy="15" r="7.500" fill="#fff" /><circle cx="15" cy="15" r="5.800" fill="#2a6fe0" /></svg></div>
    <div class="t code"><svg viewBox="0 0 30 30" width="30" height="30"><path d="m22 0 8 3v24l-8 3L9 18l-6 5-3-2 6.500-6L0 9l3-2 6 5zM22 8l-9 7 9 7z" fill="#1586d0" fill-rule="evenodd" /><path d="m22 0 8 3v24l-8 3z" fill="#2a9ff0" /></svg></div>
    <div class="grow"></div>
    <div class="t help"><svg viewBox="0 0 30 28" width="30" height="28"><circle cx="14" cy="14" r="14" fill="#fff" /><circle cx="14" cy="14" r="11.500" fill="#0d8fcf" /><path d="M9.500 10q1-5 5-4.500 5 .5 4 5-3.500 2.500-4 6" fill="none" stroke="#fff" stroke-width="3" /><circle cx="14" cy="20.500" r="1.800" fill="#fff" /><circle cx="24" cy="21" r="6" fill="#0d8fcf" /><path d="M24 20v5M24 16.500v2" stroke="#fff" stroke-width="2" /></svg></div>
    <div class="sun"></div>
    <div class="temp"><span class="fit" use:fit={38}>21°C</span></div>
    <div class="sunny"><span class="fit" use:fit={56}>مشمس</span></div>
    <div class="tray">
      <svg style:width="16px" viewBox="0 0 16 10"><path d="m1 9 7-8 7 8" /></svg>
      <svg style:width="20px" viewBox="0 0 20 12"><path d="M1 1h16v10H1zM17.500 4h2v4h-2" /><path d="M3 3h5v6H3z" fill="#eee" /></svg>
      <svg style:width="15px" viewBox="0 0 15 18"><rect x="1" y="4" width="9" height="10" rx="1" /><path d="m10 8 4-2v6l-4-2M3 1.500q4-1.500 8 0M3 16.500q4 1.500 8 0" /></svg>
      <svg style:width="17px" viewBox="0 0 17 17"><path d="M1 16C1 8 8 1 16 1M5 16c0-6 5-11 11-11M9 16c0-4 3-7 7-7M13 16q0-3 3-3" /></svg>
      <svg style:width="22px" viewBox="0 0 22 17"><path d="M1 6h3l4-4v13l-4-4H1zM11 5q3 3.500 0 7M14 3q5 5.500 0 11M17 1q7 7.500 0 15" /></svg>
      <svg style:width="31px" viewBox="0 0 31 18"><path d="M1 1h29v16H1z" /><path d="M4 5h23M4 9h23M4 13h3m3 0h11m3 0h3" stroke-dasharray="2.500 1.500" /></svg>
    </div>
    <div class="lang"><span class="fit" use:fit={29}>ENG</span></div>
    <div class="clock">
      <div><span class="fit" use:fit={48}>02:28 م</span></div>
      <div><span class="fit" use:fit={70}>٢٠٢٤/٠٣/٢٣</span></div>
    </div>
    <svg class="note" viewBox="0 0 21 20"><path d="M1 1h19v15h-6.500l-3 3-3-3H1z" fill="none" stroke="#eee" stroke-width="1.300" /></svg>
    <svg class="copilot" viewBox="0 0 26 26"><defs><linearGradient id="cp" x1="0" y1="0" x2="0" y2="1"><stop offset="0" stop-color="#1f6fe5" /><stop offset=".5" stop-color="#35b5c8" /><stop offset="1" stop-color="#f6c21c" /></linearGradient><linearGradient id="cp2" x1="0" y1="0" x2="0" y2="1"><stop offset="0" stop-color="#8f55e8" /><stop offset="1" stop-color="#f2685f" /></linearGradient></defs><path d="M5 1h9q3 0 4 4l1 3h-6l-3 9q-1 4-5 4-6 0-4-7z" fill="url(#cp)" /><path d="M14 8h7q6 0 4 7l-3 7h-9z" fill="url(#cp2)" /><rect x="6.500" y="17" width="19" height="8.500" rx="1" fill="#ffc814" /><text x="8" y="24" font-size="7.500" font-weight="700" textLength="16" fill="#221c00">PRE</text></svg>
    <div class="peek"></div>
  </footer>
</div>

<style>
  :global(body) { margin: 0; overflow: hidden; }
  .screen { width: 1920px; height: 1080px; display: flex; flex-direction: column; overflow: hidden; background: #202221; font-family: 'Open Sans', 'Noto Sans', 'DejaVu Sans', sans-serif; }
  .fit { display: inline-block; white-space: nowrap; transform-origin: left center; }
  svg { display: block; flex: none; }
  button { font: inherit; border: 0; padding: 0; margin: 0; }

  .tabstrip { height: 50px; flex: none; display: flex; align-items: center; position: relative; box-sizing: border-box; padding-left: 8px; }
  .accent { position: absolute; left: 809px; top: 0; width: 60px; height: 1px; background: #0078d7; }
  .tabsearch { width: 35px; height: 34px; border-radius: 11px; background: #3c3c3c; display: flex; align-items: center; justify-content: center; }
  .tabs { display: flex; margin-left: 6px; height: 50px; }
  .tab { width: 160px; flex: none; height: 50px; box-sizing: border-box; padding: 0 0 0 11px; display: flex; align-items: center; color: #c7c7c7; position: relative; }
  .tab:nth-child(8), .tab:nth-child(9) { width: 159.5px; }
  .tab.divided::after { content: ''; position: absolute; right: 1px; top: 15px; width: 3px; height: 20px; border-radius: 2px; background: #3e403f; }
  .tab.active { width: 151px; margin: 7px 0 0; padding-left: 10px; padding-bottom: 7px; height: 43px; background: #3c3c3c; border-radius: 11px 11px 0 0; color: #e8e8e8; }
  .tab.active::before, .tab.active::after { content: ''; position: absolute; bottom: 0; width: 13px; height: 13px; }
  .tab.active::before { left: -13px; background: radial-gradient(circle at 0 0, transparent 12.5px, #3c3c3c 13px); }
  .tab.active::after { right: -13px; background: radial-gradient(circle at 100% 0, transparent 12.5px, #3c3c3c 13px); }
  .fav { width: 20px; height: 20px; }
  .title { width: 73px; margin-left: 9px; font-size: 15.5px; -webkit-mask-image: linear-gradient(90deg, #000 68%, transparent 100%); mask-image: linear-gradient(90deg, #000 68%, transparent 100%); }
  .cross { width: 11px; height: 11px; margin-left: 15px; }
  .active .cross { margin-left: 13px; }
  .plus { width: 14px; height: 14px; margin-left: 17px; }
  .winbtns { margin-left: auto; margin-right: 21px; display: flex; gap: 41px; }
  .winbtns svg { width: 16px; height: 16px; }

  .toolbar { height: 59px; flex: none; box-sizing: border-box; background: #3c3c3c; border-bottom: 1px solid #4a4646; display: flex; align-items: center; padding-left: 5px; border-radius: 10px 10px 0 0; }
  .cell { width: 45px; flex: none; display: flex; justify-content: center; }
  .cell svg { width: 20px; height: 20px; }
  .cell .big { width: 23px; height: 23px; }
  .cell .tomato { width: 30px; height: 28px; margin-top: 10px; font-family: 'Open Sans', sans-serif; }
  .cell .avatar { width: 25px; height: 25px; }
  .omnibox { width: 1372px; height: 42px; margin: 0 10px; flex: none; box-sizing: border-box; border-radius: 21px; background: #282828; display: flex; align-items: center; padding: 0 20px 0 6px; }
  .siteinfo { width: 30px; height: 30px; border-radius: 50%; background: #3c3c3c; display: flex; align-items: center; justify-content: center; }
  .url { margin-left: 10px; flex: 1; font-size: 17.5px; color: #f0f0f0; }
  .url em { font-style: normal; color: #b4b4b4; }
  .star { width: 20px; height: 20px; }
  .vsep { width: 2px; height: 20px; margin: 0 10px; background: #5c5c5c; }

  .viewport { height: 921px; flex: none; display: flex; }
  .page { width: 1899px; height: 921px; background: #f8f8f8; position: relative; overflow: hidden; }
  header { height: 75px; background: #fff; box-shadow: 0 1px 6px rgba(0, 0, 0, 0.1); display: flex; justify-content: space-between; padding-left: 194px; padding-right: 213px; }
  .logo { display: flex; align-items: center; height: 75px; font-family: 'Liberation Serif', serif; color: #333; }
  .hat { width: 67px; height: 56px; }
  .brand { font-size: 51px; line-height: 60px; margin-left: 5px; margin-top: 3px; }
  nav { display: flex; font: 23px/78px 'Liberation Serif', serif; }
  nav a { color: #8c8c8c; text-decoration: none; padding: 0 0 0 38px; height: 75px; box-sizing: border-box; }
  nav a.current { color: #1c1c1c; padding: 0 20px; margin-right: -21px; border-top: 3px solid #a98f60; line-height: 72px; }

  main { display: flex; padding: 103px 0 0 193px; }
  .info { width: 806px; color: #6b6b6b; font: 18.5px/39.4px Lato, sans-serif; }
  h2 { margin: 14px 0 0; font: 400 40px/46px 'Liberation Serif', serif; color: #2d2d2d; }
  .intro { margin-top: 35px; }
  p { margin: 0; }
  .lead { margin-top: 38px; }
  ul { list-style: none; margin: 35px 0 0; padding: 0; display: flex; flex-direction: column; gap: 32px; }
  li { display: flex; height: 45px; }
  li .fit { margin-left: 20px; line-height: 51px; font-size: 19px; }
  .disc { width: 45px; height: 45px; border-radius: 50%; background: #8e7853; display: flex; align-items: center; justify-content: center; }
  .disc svg { width: 28px; height: 28px; margin-bottom: 1px; }

  .map { width: 707px; height: 650px; position: relative; overflow: hidden; }
  .canvas { width: 707px; height: 650px; font-family: Roboto, 'DejaVu Sans', sans-serif; }
  .ferry path { fill: none; stroke: #2a3f60; stroke-width: 1; stroke-dasharray: 9 4; }
  .minor { fill: none; stroke: #646464; stroke-width: 6; }
  .main { fill: none; stroke: #666; stroke-width: 9; }
  .hwcase { fill: none; stroke: #4a3d1a; stroke-width: 10; }
  .hw { fill: none; stroke: #6e5b2c; stroke-width: 7.5; }
  .mta { font-size: 8px; font-weight: 700; fill: #94979b; text-anchor: middle; }
  .lbl { paint-order: stroke; stroke: rgba(95, 98, 104, 0.75); stroke-width: 2.5px; stroke-linejoin: round; fill: #222326; }
  .area { font-weight: 500; }
  .soft { fill: #25272a; }
  .teal { fill: #19363a; }
  .green { fill: #1c3528; }
  .brown { fill: #5a3025; }
  .dev { font: 19px 'Liberation Sans', sans-serif; fill: #fff; fill-opacity: 0.55; }
  .glogo { font: 700 23px Lato, sans-serif; fill: #fff; paint-order: stroke; stroke: #4a566b; stroke-width: 2px; }

  .dialog { position: absolute; left: 120px; top: 6px; width: 467px; height: 244px; box-sizing: border-box; padding: 24px 31px; background: #fff; border-radius: 5px; box-shadow: 0 0 2px rgba(0, 0, 0, 0.4); font-family: Roboto, 'DejaVu Sans', sans-serif; }
  .gword { font: 500 22px/28px Lato, sans-serif; color: #5f6368; }
  .msg { margin-top: 26px; font-size: 17px; line-height: 26px; height: 26px; color: #212121; }
  .row { margin-top: 19px; height: 64px; width: 405px; box-sizing: border-box; border: 1px solid #e0e0e0; background: #fafafa; display: flex; }
  .own { width: 245px; box-sizing: border-box; padding-left: 14px; font-size: 13px; line-height: 62px; color: #757575; border-right: 1px solid #e0e0e0; }
  .okcell { flex: 1; display: flex; align-items: center; justify-content: flex-end; padding-right: 14px; }
  .ok { width: 89px; height: 45px; box-sizing: border-box; border: 1px solid #dadce0; border-radius: 5px; background: #fff; color: #1a73e8; font-size: 16px; line-height: 40px; }
  .ctl { position: absolute; left: 644px; width: 50px; background: #fff; border-radius: 3px; box-shadow: 0 1px 4px rgba(0, 0, 0, 0.3); display: flex; flex-direction: column; align-items: center; justify-content: center; }
  .full { top: 12px; height: 50px; }
  .zoom { top: 518px; height: 102px; gap: 13px; }
  .zoom i { width: 37px; height: 2px; background: #e6e6e6; }
  .credits { position: absolute; right: 0; bottom: 0; height: 18px; width: 426px; box-sizing: border-box; padding: 0 5px; background: rgba(245, 245, 245, 0.72); display: flex; align-items: center; font: 400 13px Roboto, 'DejaVu Sans', sans-serif; color: #111; }
  .credits b { width: 1px; height: 18px; margin: 0 7px; background: #333; }

  .edge { position: absolute; right: 0; top: 0; bottom: 0; width: 26px; background: linear-gradient(90deg, rgba(0, 0, 0, 0), rgba(0, 0, 0, 0.055)); }
  aside { position: absolute; right: 0; top: 250px; width: 52px; height: 108px; box-sizing: border-box; padding: 15px 0 0 11px; background: #fff; border-radius: 5px 0 0 5px; box-shadow: 0 0 22px rgba(0, 0, 0, 0.12); display: flex; flex-direction: column; gap: 21px; }
  aside svg + svg { margin-left: 2px; }
  .totop { position: absolute; left: 1839px; top: 862px; width: 46px; height: 46px; border-radius: 50%; background: #ababab; box-shadow: 0 0 0 2px #e8e8e8; display: flex; align-items: center; justify-content: center; }
  .scrollbar { width: 21px; background: #f1f1f1; display: flex; flex-direction: column; align-items: center; box-sizing: border-box; padding: 9px 0 8px; }
  .scrollbar svg { width: 10px; height: 6px; }
  .thumb { width: 17px; height: 147px; margin: 582px 0 auto; background: #c1c1c1; }

  footer { height: 50px; flex: none; display: flex; align-items: center; background: linear-gradient(90deg, #20323b 0, #22343d 50%, #25313a 61%, #2b2f30 70%, #2a2f2f 76%, #1d2e35 86%, #1f2f37 100%); color: #f0f0f0; }
  .t { height: 50px; display: flex; align-items: center; justify-content: center; box-sizing: border-box; flex: none; }
  .start { width: 60px; }
  .search { width: 360px; height: 50px; box-sizing: border-box; border: 1px solid #5f6364; background: #313232; display: flex; align-items: center; padding-left: 13px; flex: none; }
  .stext { width: 221px; margin-left: 14px; font-size: 18.5px; color: #dedede; }
  .view { width: 60px; margin-right: 32px; }
  .calc { width: 1px; overflow: visible; }
  .store { width: 124px; }
  .edgeapp, .chrome, .code { width: 61px; }
  .edgeapp { width: 60px; }
  .files { margin-left: -30px; margin-right: 1px; width: 62px; background: linear-gradient(#76b9ed, #76b9ed) center bottom / 51px 3px no-repeat; }
  .chrome { background: linear-gradient(#76b9ed, #76b9ed) center bottom / 100% 3px no-repeat #54616a; margin-left: 1px; }
  .grow { flex: 1; }
  .help { width: 30px; margin-right: 96px; }
  .sun { width: 26px; height: 26px; border-radius: 50%; background: linear-gradient(160deg, #f5b02c, #ee6a10); margin-right: 12px; }
  .temp { font-size: 18px; margin-right: 11px; }
  .sunny { font-size: 18px; margin-right: 31px; }
  .tray { display: flex; align-items: center; gap: 11.8px; }
  .tray svg { fill: none; stroke: #eee; stroke-width: 1.3; }
  .lang { font-size: 15.5px; margin: 0 13px 0 12px; }
  .clock { width: 71px; display: flex; flex-direction: column; align-items: center; font-size: 15.5px; line-height: 23px; margin-right: 20px; }
  .note { width: 21px; height: 20px; margin-right: 26px; }
  .copilot { width: 27px; height: 26px; margin-right: 22px; }
  .peek { width: 1px; height: 50px; background: #6c777c; margin-right: 5px; }
</style>
